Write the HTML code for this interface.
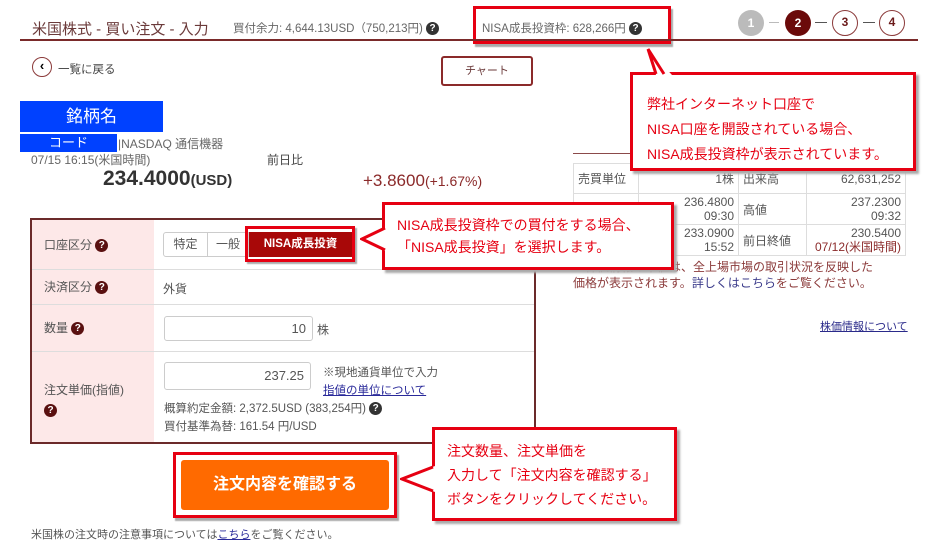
<!DOCTYPE html>
<html><head><meta charset="utf-8"><style>
*{margin:0;padding:0;box-sizing:border-box}
body{width:938px;height:549px;background:#fff;position:relative;overflow:hidden;font-family:"Liberation Sans","Noto Sans CJK JP",sans-serif;color:#555;font-size:12px}
.a{position:absolute;white-space:nowrap}
.q{display:inline-block;width:13px;height:13px;border-radius:50%;background:#333;color:#fff;font-size:10px;line-height:13px;text-align:center;font-weight:bold;vertical-align:middle}
.qd{background:#5a1010}
.co{position:absolute;border:3px solid #e60012;background:#fff;color:#e60012;font-size:14px;line-height:22px;box-shadow:3px 3px 2px #aaa}
td{border:1px solid #ddd;font-size:12px;padding:1px 4px;color:#555}
.lb{position:absolute;left:0;width:122px;background:#fde8e8;border-bottom:1px solid #ddd;padding-left:12px;font-size:12px;color:#555}
</style></head><body>
<div class="a" style="left:32px;top:18px;font-size:15px;color:#6b3a3a">米国株式 - 買い注文 - 入力</div>
<div class="a" style="left:233px;top:20px;font-size:11.5px;color:#666">買付余力: 4,644.13USD（750,213円) <span class="q">?</span></div>
<div class="a" style="left:482px;top:20px;font-size:11.5px;color:#666">NISA成長投資枠: 628,266円 <span class="q">?</span></div>
<div class="a" style="left:473px;top:6px;width:198px;height:38px;border:3px solid #e60012;box-shadow:2px 3px 1px #aaa"></div>
<div class="a" style="left:20px;top:39px;width:898px;height:2px;background:#7a2a2a"></div>
<div class="a" style="left:738px;top:10px;width:26px;height:26px;border-radius:50%;background:#bbb;color:#fff;text-align:center;line-height:26px;font-weight:bold">1</div>
<div class="a" style="left:769px;top:22px;width:10px;height:1px;background:#bbb"></div>
<div class="a" style="left:785px;top:10px;width:26px;height:26px;border-radius:50%;background:#6b0a0a;color:#fff;text-align:center;line-height:26px;font-weight:bold">2</div>
<div class="a" style="left:815px;top:22px;width:12px;height:1px;background:#555"></div>
<div class="a" style="left:832px;top:10px;width:26px;height:26px;border-radius:50%;border:1.5px solid #8b3a3a;color:#6b1a1a;text-align:center;line-height:23px;font-weight:bold">3</div>
<div class="a" style="left:863px;top:22px;width:12px;height:1px;background:#555"></div>
<div class="a" style="left:879px;top:10px;width:26px;height:26px;border-radius:50%;border:1.5px solid #8b3a3a;color:#6b1a1a;text-align:center;line-height:23px;font-weight:bold">4</div>
<div class="a" style="left:32px;top:57px;width:20px;height:20px;border-radius:50%;border:1.5px solid #8b3a3a;color:#000;text-align:center;line-height:16px;font-weight:bold;font-size:13px">‹</div>
<div class="a" style="left:58px;top:61px;font-size:11.5px;color:#444">一覧に戻る</div>
<div class="a" style="left:441px;top:56px;width:92px;height:30px;border:2px solid #8b2a2a;border-radius:3px;text-align:center;line-height:26px;font-size:11px;color:#6b3a3a">チャート</div>
<div class="a" style="left:20px;top:101px;width:143px;height:31px;background:#0041ff;color:#fff;font-size:17px;text-align:center;line-height:31px">銘柄名</div>
<div class="a" style="left:20px;top:134px;width:97px;height:18px;background:#0041ff;color:#fff;font-size:13px;text-align:center;line-height:18px">コード</div>
<div class="a" style="left:118px;top:135px;font-size:12px;color:#666">|NASDAQ 通信機器</div>
<div class="a" style="left:31px;top:151px;font-size:12px;color:#666">07/15 16:15(米国時間)</div>
<div class="a" style="left:267px;top:151px;font-size:12px;color:#444">前日比</div>
<div class="a" style="left:103px;top:167px;font-size:21px;font-weight:bold;color:#333;line-height:24px">234.4000<span style="font-size:15px">(USD)</span></div>
<div class="a" style="left:363px;top:171px;font-size:17px;color:#8b2a2a">+3.8600<span style="font-size:14px">(+1.67%)</span></div>
<div class="a" style="left:573px;top:153px;width:332px;height:1px;background:#8b4a4a"></div>
<table class="a" style="left:573px;top:163px;width:333px;border-collapse:collapse">
<tr style="height:30px"><td style="width:65px">売買単位</td><td style="width:100px;text-align:right">1株</td><td style="width:68px">出来高</td><td style="text-align:right">62,631,252</td></tr>
<tr style="height:30px"><td>始値</td><td style="text-align:right;line-height:14px">236.4800<br>09:30</td><td>高値</td><td style="text-align:right;line-height:14px">237.2300<br>09:32</td></tr>
<tr style="height:30px"><td>安値</td><td style="text-align:right;line-height:14px">233.0900<br>15:52</td><td>前日終値</td><td style="text-align:right;line-height:14px">230.5400<br><span style="color:#8b2a2a">07/12(米国時間)</span></td></tr>
</table>
<div class="a" style="left:573px;top:259px;font-size:12px;color:#8b3a3a;line-height:16px">※株価情報の本値は、全上場市場の取引状況を反映した<br>価格が表示されます。<span style="color:#3a3a8a">詳しくはこちら</span>をご覧ください。</div>
<div class="a" style="left:820px;top:318px;font-size:11px;color:#2a2a8a;text-decoration:underline">株価情報について</div>
<div class="a" style="left:30px;top:218px;width:506px;height:226px;border:2px solid #6b2a2a;overflow:hidden">
<div style="position:absolute;left:120px;top:0;width:1px;height:100%;background:#ddd"></div>
<div class="lb" style="top:0;height:50px;line-height:50px">口座区分 <span class="q qd">?</span></div>
<div class="lb" style="top:50px;height:35px;line-height:35px">決済区分 <span class="q qd">?</span></div>
<div class="lb" style="top:85px;height:47px;line-height:47px">数量 <span class="q qd">?</span></div>
<div class="lb" style="top:132px;height:94px;padding-top:28px;line-height:20px;border:none">注文単価(指値)<br><span class="q qd">?</span></div>
<div style="position:absolute;left:121px;top:49px;width:400px;height:1px;background:#ddd"></div>
<div style="position:absolute;left:121px;top:84px;width:400px;height:1px;background:#ddd"></div>
<div style="position:absolute;left:121px;top:131px;width:400px;height:1px;background:#ddd"></div>
<div class="a" style="left:131px;top:12px;width:45px;height:25px;border:1px solid #ccc;border-radius:3px 0 0 3px;text-align:center;line-height:23px">特定</div>
<div class="a" style="left:175px;top:12px;width:42px;height:25px;border:1px solid #ccc;text-align:center;line-height:23px">一般</div>
<div class="a" style="left:217px;top:12px;width:103px;height:25px;background:#a80808;color:#fff;text-align:center;line-height:25px;font-weight:bold;font-size:11.5px">NISA成長投資</div>
<div class="a" style="left:131px;top:60px">外貨</div>
<div class="a" style="left:132px;top:96px;width:149px;height:25px;border:1px solid #ccc;border-radius:3px;text-align:right;padding-right:6px;line-height:23px;font-size:13px">10</div>
<div class="a" style="left:285px;top:101px">株</div>
<div class="a" style="left:132px;top:142px;width:147px;height:28px;border:1px solid #ccc;border-radius:3px;text-align:right;padding-right:6px;line-height:26px;font-size:13px">237.25</div>
<div class="a" style="left:291px;top:144px;font-size:11.5px">※現地通貨単位で入力</div>
<div class="a" style="left:291px;top:162px;font-size:11.5px;color:#2a2a9a;text-decoration:underline">指値の単位について</div>
<div class="a" style="left:132px;top:180px;font-size:11.5px">概算約定金額: 2,372.5USD (383,254円) <span class="q">?</span></div>
<div class="a" style="left:132px;top:198px;font-size:11.5px">買付基準為替: 161.54 円/USD</div>
</div>
<div class="a" style="left:245px;top:226px;width:110px;height:36px;border:3px solid #e60012;box-shadow:2px 2px 1px #aaa"></div>
<div class="a" style="left:173px;top:452px;width:224px;height:66px;border:3px solid #e60012;box-shadow:2px 3px 1px #aaa"></div>
<div class="a" style="left:181px;top:460px;width:208px;height:50px;background:#ff6a00;border-radius:3px;color:#fff;font-size:16px;font-weight:bold;text-align:center;line-height:50px">注文内容を確認する</div>
<div class="a" style="left:31px;top:526px;font-size:11px;color:#555">米国株の注文時の注意事項については<span style="color:#2a2a9a;text-decoration:underline">こちら</span>をご覧ください。</div>
<div class="co" style="left:630px;top:72px;width:286px;height:99px;padding:17px 0 0 14px;line-height:25px">弊社インターネット口座で<br>NISA口座を開設されている場合、<br>NISA成長投資枠が表示されています。</div>
<svg class="a" style="left:638px;top:48px" width="40" height="28"><polygon points="10,1 18,27 34,27" fill="#fff"/><polyline points="18,26 10,1 26,26" fill="none" stroke="#e60012" stroke-width="3"/></svg>
<div class="co" style="left:382px;top:202px;width:292px;height:68px;padding:9px 0 0 12px">NISA成長投資枠での買付をする場合、<br>「NISA成長投資」を選択します。</div>
<svg class="a" style="left:360px;top:222px" width="28" height="36"><polygon points="2,17 27,5 27,30" fill="#fff"/><polyline points="25,6 2,17 25,28" fill="none" stroke="#e60012" stroke-width="3"/></svg>
<div class="co" style="left:432px;top:427px;width:245px;height:94px;padding:9px 0 0 12px;line-height:24px">注文数量、注文単価を<br>入力して「注文内容を確認する」<br>ボタンをクリックしてください。</div>
<svg class="a" style="left:400px;top:462px" width="36" height="36"><polygon points="2,17 35,4 35,30" fill="#fff"/><polyline points="33,5 2,17 33,29" fill="none" stroke="#e60012" stroke-width="3"/></svg>
</body></html>
